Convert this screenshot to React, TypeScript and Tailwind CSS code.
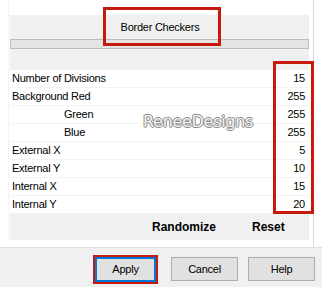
import React from "react";

const rows: { label: string; value: string; indent?: boolean }[] = [
  { label: "Number of Divisions", value: "15" },
  { label: "Background Red", value: "255" },
  { label: "Green", value: "255", indent: true },
  { label: "Blue", value: "255", indent: true },
  { label: "External X", value: "5" },
  { label: "External Y", value: "10" },
  { label: "Internal X", value: "15" },
  { label: "Internal Y", value: "20" },
];

export default function App() {
  return (
    <div
      className="relative w-[322px] h-[287px] bg-white overflow-hidden text-[11px] text-black tracking-[-0.25px]"
      style={{ fontFamily: '"Liberation Sans", Arial, sans-serif' }}
    >
      <div className="flex h-[247px]">
        <div className="w-[10px] flex">
          <div className="w-[8px]" />
          <div className="w-[1px] bg-[#f4f4f4] h-[240px]" />
        </div>
        <div className="w-[299px] flex flex-col">
          <div className="h-[15px]" />
          <div className="h-[55px] bg-[#f0f0f0] flex flex-col">
            <div className="h-[24px] flex items-center justify-center pl-[1px]">Border Checkers</div>
            <div className="h-[10px] bg-[#e4e4e4] border border-[#bcbcbc]" />
          </div>
          {rows.map((r) => (
            <div key={r.label} className="h-[18px] flex items-center border-b border-[#f3f3f3] bg-white">
              <div className={r.indent ? "pl-[54px] flex-1" : "pl-[2px] flex-1"}>{r.label}</div>
              <div className="pr-[4px]">{r.value}</div>
            </div>
          ))}
          <div className="h-[26px] bg-[#f0f0f0] flex items-center pl-[142px] gap-[36px] text-[12px] font-bold tracking-normal">
            <span>Randomize</span>
            <span>Reset</span>
          </div>
        </div>
        <div className="w-[4px]" />
        <div className="w-[1px] bg-[#dadada]" />
      </div>
      <div className="h-[40px] bg-[#f0f0f0] border-t border-[#dfdfdf] pt-[7px] flex">
        <div className="w-[93px]" />
        <div className="w-[65px] h-[29px] border-[2px] border-[#c8190f] p-0">
          <div className="w-full h-full border-[2px] border-[#0078d7] bg-[#e1e1e1] flex items-center justify-center">
            Apply
          </div>
        </div>
        <div className="w-[13px]" />
        <div className="mt-[2px] w-[67px] h-[24px] border border-[#adadad] bg-[#e1e1e1] flex items-center justify-center">
          Cancel
        </div>
        <div className="w-[10px]" />
        <div className="mt-[2px] w-[67px] h-[24px] border border-[#adadad] bg-[#e1e1e1] flex items-center justify-center">
          Help
        </div>
      </div>

      <div className="absolute left-[103px] top-[7px] w-[118px] h-[39px] border-[3px] border-[#c8190f]" />
      <div className="absolute left-[273px] top-[61px] w-[41px] h-[153px] border-[3px] border-[#c8190f]" />
      <div
        className="absolute left-[143px] top-[110px] text-[16px] text-[#f4f4f4] tracking-[-0.3px] [text-shadow:1px_0_0_#8a8a8a,-1px_0_0_#8a8a8a,0_1px_0_#8a8a8a,0_-1px_0_#8a8a8a]"
        style={{ fontFamily: '"DejaVu Sans", sans-serif' }}
      >
        ReneeDesigns
      </div>
    </div>
  );
}
